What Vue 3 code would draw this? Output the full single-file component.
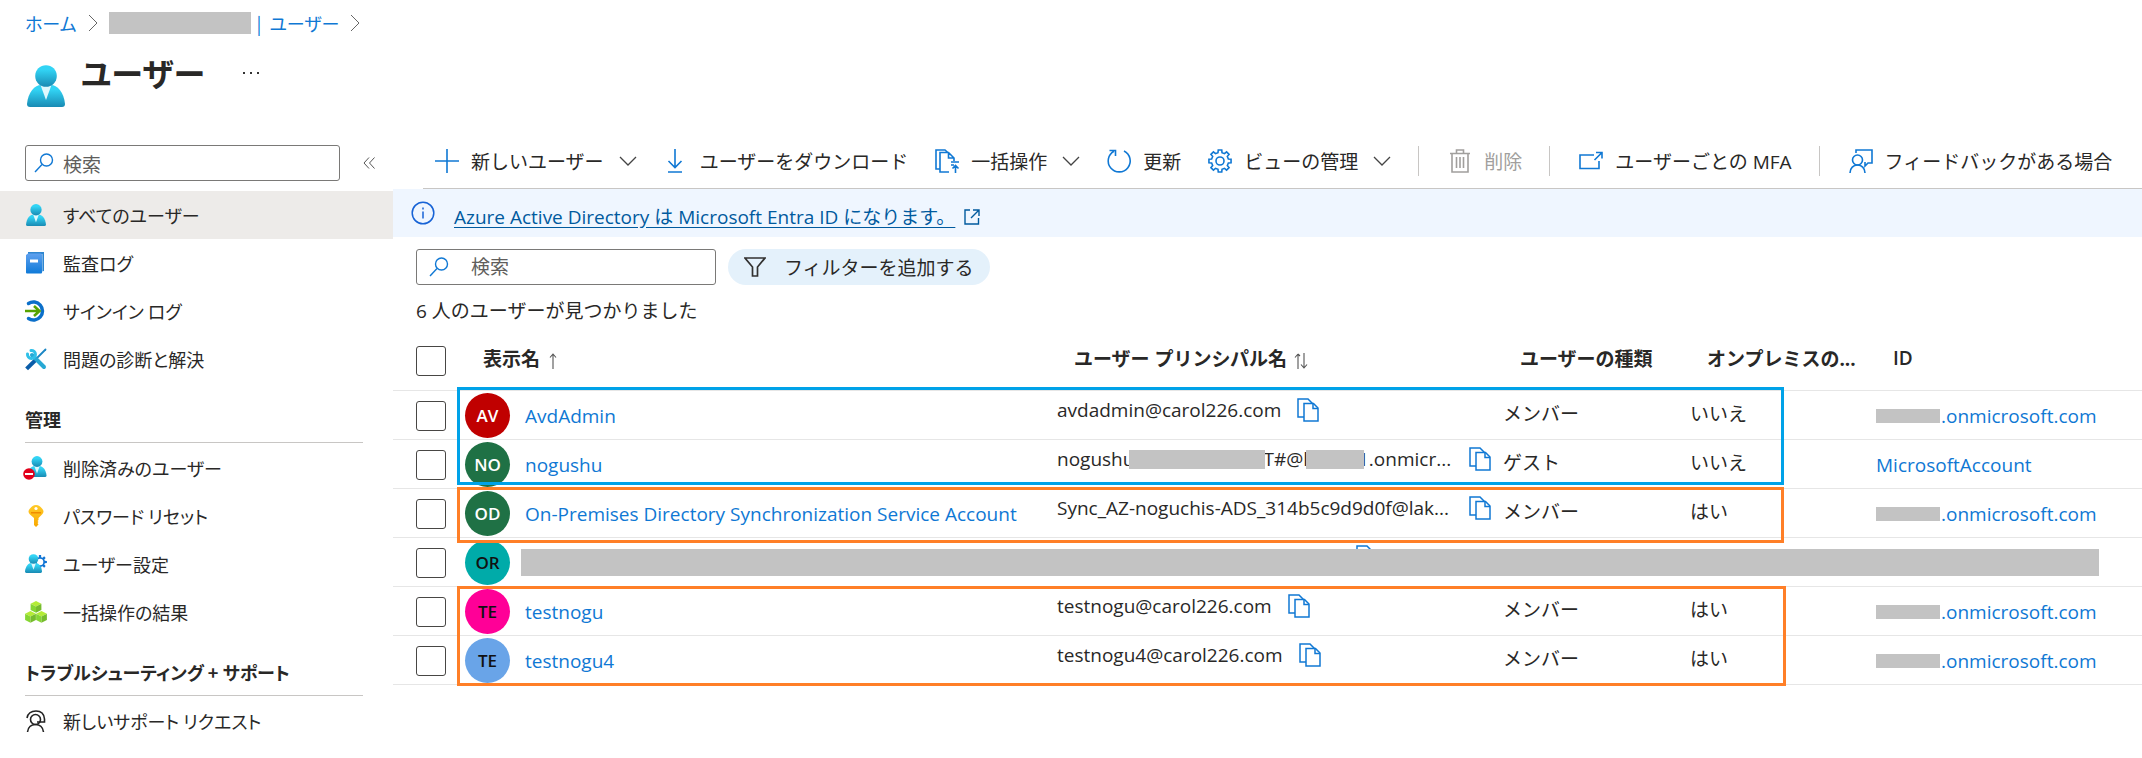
<script setup>
import { ref } from 'vue'

const gear = (cx, cy, outer, inner, teeth) => {
  const pts = []
  const step = (Math.PI * 2) / teeth
  for (let i = 0; i < teeth; i++) {
    const a = i * step - Math.PI / 2
    for (const [r, o] of [[inner, -0.3], [outer, -0.2], [outer, 0.2], [inner, 0.3]]) {
      pts.push(`${(cx + r * Math.cos(a + o * step)).toFixed(2)} ${(cy + r * Math.sin(a + o * step)).toFixed(2)}`)
    }
  }
  return `M${pts.join('L')}Z`
}
const gearLarge = gear(12, 12, 11.2, 8.6, 8)
const gearSmall = gear(15, 9, 7, 5, 8)

const general = [
  { icon: 'user', label: 'すべてのユーザー', active: true },
  { icon: 'book', label: '監査ログ' },
  { icon: 'signin', label: 'サインイン ログ' },
  { icon: 'tools', label: '問題の診断と解決' },
]
const manage = [
  { icon: 'deleted', label: '削除済みのユーザー' },
  { icon: 'key', label: 'パスワード リセット' },
  { icon: 'settings', label: 'ユーザー設定' },
  { icon: 'cubes', label: '一括操作の結果' },
]
const support = [{ icon: 'support', label: '新しいサポート リクエスト' }]
const groups = [
  { title: '', items: general },
  { title: '管理', items: manage },
  { title: 'トラブルシューティング + サポート', items: support },
]

const commands = [
  { icon: 'plus', label: '新しいユーザー', menu: true },
  { icon: 'download', label: 'ユーザーをダウンロード' },
  { icon: 'bulk', label: '一括操作', menu: true },
  { icon: 'refresh', label: '更新' },
  { icon: 'gear', label: 'ビューの管理', menu: true },
  { icon: 'trash', label: '削除', disabled: true, split: true },
  { icon: 'external', label: 'ユーザーごとの MFA', split: true },
  { icon: 'feedback', label: 'フィードバックがある場合', split: true },
]

const users = [
  { initials: 'AV', tone: 'red', name: 'AvdAdmin', upn: 'avdadmin@carol226.com', type: 'メンバー', sync: 'いいえ', tenant: true },
  { initials: 'NO', tone: 'green', name: 'nogushu', masked: true, wide: true, type: 'ゲスト', sync: 'いいえ', id: 'MicrosoftAccount' },
  { initials: 'OD', tone: 'green', name: 'On-Premises Directory Synchronization Service Account', upn: 'Sync_AZ-noguchis-ADS_314b5c9d9d0f@lak...', wide: true, type: 'メンバー', sync: 'はい', tenant: true },
  { initials: 'OR', tone: 'teal', hidden: true },
  { initials: 'TE', tone: 'pink', name: 'testnogu', upn: 'testnogu@carol226.com', type: 'メンバー', sync: 'はい', tenant: true },
  { initials: 'TE', tone: 'sky', name: 'testnogu4', upn: 'testnogu4@carol226.com', type: 'メンバー', sync: 'はい', tenant: true },
]
const menuQuery = ref('')
const userQuery = ref('')
</script>

<template>
  <div class="page">
    <svg class="defs" aria-hidden="true">
      <defs>
        <linearGradient id="cyan" x1="0" y1="0" x2="0" y2="1">
          <stop offset="0.2" stop-color="#32d4f5" />
          <stop offset="1" stop-color="#198ab3" />
        </linearGradient>
        <linearGradient id="blue" x1="0" y1="0" x2="0" y2="1">
          <stop offset="0" stop-color="#5ea0ef" />
          <stop offset="1" stop-color="#0f7ad8" />
        </linearGradient>
        <linearGradient id="gold" x1="0" y1="0" x2="0" y2="1">
          <stop offset="0" stop-color="#ffca28" />
          <stop offset="1" stop-color="#f9a800" />
        </linearGradient>
        <symbol id="person" viewBox="0 0 38 42">
          <path d="M35 42H3q-3 0-3-3C1 27 8 20 14 20h10c6 0 13 7 14 19q0 3-3 3Z" fill="url(#cyan)" />
          <path d="M13.500 20h11L19 35Z" fill="#dff8fd" />
          <circle cx="19" cy="11" r="10.800" fill="url(#cyan)" />
        </symbol>
        <symbol id="copy" viewBox="0 0 22 24">
          <g fill="#fff" stroke="#1078d4" stroke-width="1.500">
            <path d="M1 1h10l5 5v13H1Z" />
            <path d="M7 5.500h9.500l4.500 4.500v13H7Z" />
            <path d="M16 5.500V10.500h5" fill="none" />
          </g>
        </symbol>
      </defs>
    </svg>

    <header class="top">
      <nav class="crumbs" aria-label="階層">
        <a href="#">ホーム</a>
        <svg class="crumb-arrow" viewBox="0 0 10 18"><path d="M1 1l8 8-8 8" /></svg>
        <span class="mask crumb-mask"></span>
        <a href="#">| &nbsp;ユーザー</a>
        <svg class="crumb-arrow" viewBox="0 0 10 18"><path d="M1 1l8 8-8 8" /></svg>
      </nav>
      <div class="heading">
        <svg class="heading-icon"><use href="#person" /></svg>
        <h1>ユーザー</h1>
        <button class="more" aria-label="その他"><i></i><i></i><i></i></button>
      </div>
    </header>

    <div class="body">
      <aside class="side">
        <div class="side-search">
          <label class="field">
            <svg viewBox="0 0 20 20"><circle cx="12.500" cy="7" r="6" /><path d="M8 11.500L1 19" /></svg>
            <input v-model="menuQuery" type="text" placeholder="検索" aria-label="メニューの検索" />
          </label>
          <button class="collapse" aria-label="折りたたむ">
            <svg viewBox="0 0 12 12"><path d="M6 .5L1 6l5 5.500M11.500.5L6.500 6l5 5.500" /></svg>
          </button>
        </div>
        <section v-for="g in groups" :key="g.title" class="group">
          <h2 v-if="g.title">{{ g.title }}</h2>
          <a v-for="item in g.items" :key="item.label" href="#" class="item" :class="{ active: item.active }">
            <svg viewBox="0 0 22 22" class="item-icon">
              <use v-if="item.icon === 'user'" href="#person" x="1" y="0" width="20" height="22" />
              <g v-else-if="item.icon === 'book'">
                <path d="M4 0h15v19l-3 2Z" fill="#b9d9f5" />
                <path d="M3 0h16v19h-1.500V2H3Z" fill="#2f86d0" />
                <path d="M1 3l2-1.500h13l1 1v18q0 1-1 1H2q-1 0-1-1Z" fill="url(#blue)" />
                <path d="M5 7.500h8v3H5Z" fill="#fff" />
              </g>
              <g v-else-if="item.icon === 'signin'" fill="none">
                <path d="M3.500 3.500A9 9 0 1 1 3.500 18.500" stroke="#0b6fc9" stroke-width="3.500" stroke-linecap="round" />
                <path d="M0 11h14M9 6l5.500 5L9 16" stroke="#57a300" stroke-width="2.600" />
              </g>
              <g v-else-if="item.icon === 'tools'" fill="none" stroke-linecap="round">
                <path d="M20.500 1.500l-9 9" stroke="#1a86c4" stroke-width="1.800" />
                <path d="M9 13.500l-6 6" stroke="#0a5ca8" stroke-width="4" stroke-linecap="square" />
                <path d="M7 7l12 12" stroke="#27a8d4" stroke-width="4" />
                <path d="M6 2.500A4 4 0 1 1 2.500 6" stroke="#2fc0e8" stroke-width="3" />
              </g>
              <g v-else-if="item.icon === 'deleted'">
                <use href="#person" x="2" y="-1" width="20" height="21" />
                <circle cx="4" cy="17" r="5.800" fill="#e2001a" />
                <path d="M0 16h8v2H0Z" fill="#fff" />
              </g>
              <g v-else-if="item.icon === 'key'">
                <path d="M11 0c3 0 4 1.500 6 3.500s2 4 0 6L13.500 13v2l-1 1 1 1-1 1 1 1.500L11 22l-2-2v-7L5 9.500c-2-2-2-4 0-6S8 0 11 0Z" fill="url(#gold)" />
                <circle cx="11" cy="3.500" r="1.600" fill="#fff" />
                <path d="M6 7h10v1.500H6Z" fill="#f08b00" />
              </g>
              <g v-else-if="item.icon === 'settings'">
                <path :d="gearSmall" fill="#0f74d4" />
                <circle cx="15" cy="9" r="3.300" fill="#fff" />
                <use href="#person" x="0" y="1" width="17" height="19" />
              </g>
              <g v-else-if="item.icon === 'cubes'">
                <g v-for="p in [[11, 0], [5.500, 10], [16.500, 10]]" :key="p[0]" :transform="`translate(${p[0]} ${p[1]})`">
                  <path d="M0 0L5.400 2.800 0 5.600-5.400 2.800Z" fill="#b4ec36" />
                  <path d="M-5.400 2.800L0 5.600V11.800L-5.400 9Z" fill="#86d633" />
                  <path d="M5.400 2.800L0 5.600V11.800L5.400 9Z" fill="#76bc2d" />
                </g>
              </g>
              <g v-else fill="none" stroke="#222" stroke-width="1.600">
                <path d="M2 8C3 3 7 1 11 1s8 2 8.500 8v3H12" />
                <circle cx="10.500" cy="9.500" r="5" />
                <path d="M2.500 22c.5-5 4-7.500 8-7.500s7.500 2.500 8 7.500" />
              </g>
            </svg>
            {{ item.label }}
          </a>
        </section>
      </aside>

      <main class="main">
        <div class="toolbar" role="toolbar">
          <template v-for="c in commands" :key="c.label">
            <span v-if="c.split" class="split"></span>
            <button class="cmd" :disabled="c.disabled">
              <svg viewBox="0 0 24 24" class="cmd-icon" :class="c.icon">
                <path v-if="c.icon === 'plus'" d="M12 0v24M0 12h24" />
                <path v-else-if="c.icon === 'download'" d="M11 0v18M4.500 12l6.500 6.500 6.500-6.500M4 23h14" />
                <g v-else-if="c.icon === 'bulk'">
                  <path d="M5 20H1V1h9l4 3.500M14 23H5V3.500h8.500L19 9v3M13.500 3.500V9H19M16 13h8M16 16h3M20.500 24V17M17.500 19.500l3-3 3 3" />
                </g>
                <path v-else-if="c.icon === 'refresh'" d="M17 2A11 11 0 1 1 7 2.200M2.500 1.500H8.500V7" />
                <g v-else-if="c.icon === 'gear'"><path :d="gearLarge" /><circle cx="12" cy="12" r="4" /></g>
                <path v-else-if="c.icon === 'trash'" d="M2 4.500h20M4 4.500V23h16V4.500M8.500 4V1h7v3M8.500 8v11M12 8v11M15.500 8v11" />
                <path v-else-if="c.icon === 'external'" d="M15 6H1v13.500h19V12M15.500 11L22.500 4M17 3.500h6v6" />
                <g v-else>
                  <circle cx="8.500" cy="11" r="5" />
                  <path d="M1 24c0-5 3.500-8 7.500-8s7.500 3 7.500 8M7 4V1h16v13h-4l-3 3v-4" />
                </g>
              </svg>
              <span>{{ c.label }}</span>
              <svg v-if="c.menu" class="down" viewBox="0 0 18 10"><path d="M1 1l8 8 8-8" /></svg>
            </button>
          </template>
        </div>

        <div class="banner">
          <svg class="info" viewBox="0 0 24 24"><circle cx="12" cy="12" r="10.800" /><path d="M12 10.500v7M12 6.500v2" /></svg>
          <a href="#">Azure Active Directory は Microsoft Entra ID になります。</a>
          <svg class="out" viewBox="0 0 16 16"><path d="M6 1H1v14h13.500V9M9 1h6v6M15 1L7 9" /></svg>
        </div>

        <div class="filters">
          <label class="field">
            <svg viewBox="0 0 20 20"><circle cx="12.500" cy="7" r="6" /><path d="M8 11.500L1 19" /></svg>
            <input v-model="userQuery" type="text" placeholder="検索" aria-label="ユーザーの検索" />
          </label>
          <button class="pill">
            <svg viewBox="0 0 22 20"><path d="M1 1h20l-7.500 9v9h-5v-9Z" /></svg>
            フィルターを追加する
          </button>
        </div>
        <p class="count">6 人のユーザーが見つかりました</p>

        <div class="grid">
          <table>
            <colgroup>
              <col class="c-check" /><col class="c-name" /><col class="c-upn" /><col class="c-type" /><col class="c-sync" /><col />
            </colgroup>
            <thead>
              <tr>
                <th><input type="checkbox" aria-label="すべて選択" /></th>
                <th class="h-name">表示名
                  <svg class="sort" viewBox="0 0 8 16"><path d="M4 16V1M1 4.500L4 1l3 3.500" /></svg>
                </th>
                <th>ユーザー プリンシパル名
                  <svg class="sort both" viewBox="0 0 14 16"><path d="M4 16V1M1 4.500L4 1M10 0v15M7 11.500l3 3.500 3-3.500M4 1l2 2" /></svg>
                </th>
                <th>ユーザーの種類</th>
                <th>オンプレミスの...</th>
                <th>ID</th>
              </tr>
            </thead>
            <tbody>
              <tr v-for="(u, i) in users" :key="i">
                <td><input type="checkbox" :aria-label="u.name || u.initials" /></td>
                <td :colspan="u.hidden ? 5 : 1">
                  <div class="cell name">
                    <span class="avatar" :class="u.tone">{{ u.initials }}</span>
                    <a v-if="u.name" href="#">{{ u.name }}</a>
                    <template v-else>
                      <svg class="copy behind"><use href="#copy" /></svg>
                      <span class="mask row-mask"></span>
                    </template>
                  </div>
                </td>
                <template v-if="!u.hidden">
                  <td>
                    <div class="cell upn" :class="{ wide: u.wide }">
                      <span v-if="u.masked" class="masked">nogushu<span class="mask m1"></span>T#@l<span class="mask m2"></span>1.onmicr...</span>
                      <span v-else>{{ u.upn }}</span>
                      <button class="copy-btn" aria-label="コピー"><svg class="copy"><use href="#copy" /></svg></button>
                    </div>
                  </td>
                  <td><div class="cell kana">{{ u.type }}</div></td>
                  <td><div class="cell kana">{{ u.sync }}</div></td>
                  <td>
                    <div class="cell id">
                      <a v-if="u.tenant" href="#"><span class="mask m3"></span>.onmicrosoft.com</a>
                      <a v-else href="#">{{ u.id }}</a>
                    </div>
                  </td>
                </template>
              </tr>
            </tbody>
          </table>
          <div class="mark mark-a"></div>
          <div class="mark mark-b"></div>
          <div class="mark mark-c"></div>
        </div>
      </main>
    </div>
  </div>
</template>

<style>
body { margin: 0; background: #fff; }
</style>

<style scoped>
.page { font-family: 'Open Sans', 'Noto Sans CJK JP', sans-serif; font-size: 19px; color: #292827; overflow: hidden; min-height: 100vh; }
.page *, .page *::before { box-sizing: border-box; }
.defs { position: absolute; width: 0; height: 0; }
svg { display: block; flex: none; }
a { color: #0f78d4; text-decoration: none; }
button { font: inherit; color: inherit; background: none; border: 0; padding: 0; display: flex; align-items: center; white-space: nowrap; }
.mask { background: #c3c3c3; flex: none; }

.top { height: 134px; padding-left: 25px; font-family: 'Noto Sans CJK JP', sans-serif; font-size: 18px; font-feature-settings: 'palt'; }
.crumbs { display: flex; align-items: center; height: 46px; }
.crumbs a { line-height: 46px; white-space: nowrap; }
.crumb-arrow { width: 10px; height: 18px; margin: 0 11px; fill: none; stroke: #666; stroke-width: 1; }
.crumb-mask { width: 142px; height: 22px; margin-right: 6px; }
.heading { display: flex; align-items: flex-start; }
.heading-icon { width: 38px; height: 42px; margin: 19px 16px 0 2px; }
h1 { margin: 0; font-size: 32px; line-height: 52px; font-weight: 700; }
.more { gap: 5px; margin: 26px 0 0 38px; }
.more i { width: 2px; height: 2px; background: #333; }

.body { display: flex; }
.side { width: 393px; flex: none; padding-top: 11px; font-family: 'Noto Sans CJK JP', sans-serif; font-size: 18px; font-feature-settings: 'palt'; }
.side-search { display: flex; align-items: center; padding-left: 25px; margin-bottom: 10px; }
.field { display: flex; align-items: center; height: 36px; border: 1px solid #7a7977; border-radius: 3px; background: #fff; padding: 0 8px; flex: none; }
.field svg { width: 20px; height: 20px; fill: none; stroke: #1078d4; stroke-width: 1.4; }
.field input { flex: 1; min-width: 0; border: 0; outline: 0; background: none; padding: 0; margin-left: 9px; font: inherit; font-size: 19px; height: 32px; }
.field input::placeholder { color: #605e5c; opacity: 1; }
.side .field { width: 315px; }
.collapse { margin-left: 23px; }
.collapse svg { width: 12px; height: 12px; fill: none; stroke: #555; stroke-width: 1; }
.group h2 { margin: 12px 30px 1px 25px; height: 48px; line-height: 48px; font-size: 18px; font-weight: 700; border-bottom: 1px solid #c8c6c4; white-space: nowrap; }
.item { display: flex; align-items: center; height: 48px; padding-left: 25px; color: #292827; white-space: nowrap; }
.item.active { background: #edebe9; }
.item-icon { width: 22px; height: 22px; margin-right: 16px; overflow: visible; }

.main { flex: 1; min-width: 0; }
.toolbar { display: flex; align-items: center; height: 55px; margin-left: 30px; padding-left: 12px; border-bottom: 1px solid #c8c6c4; }
.cmd { margin-right: 27px; }
.cmd-icon { width: 24px; height: 24px; margin-right: 12px; fill: none; stroke: #1078d4; stroke-width: 1.6; overflow: visible; }
.down { width: 18px; height: 10px; margin-left: 15px; fill: none; stroke: #444; stroke-width: 1.3; }
.cmd:disabled { color: #a19f9d; }
.cmd:disabled .cmd-icon { stroke: #a19f9d; }
.split { width: 1px; height: 30px; background: #c8c6c4; margin-right: 29px; }
.banner { display: flex; align-items: center; height: 48px; background: #eff6ff; padding-left: 18px; }
.info { width: 24px; height: 24px; margin-right: 19px; fill: none; stroke: #1763d6; stroke-width: 1.5; }
.banner a { color: #005a9e; line-height: 24px; margin-top: 8px; text-decoration: underline; text-underline-offset: 3px; }
.out { width: 16px; height: 16px; margin: 8px 0 0 9px; fill: none; stroke: #005a9e; stroke-width: 1.4; }
.filters { display: flex; gap: 12px; padding: 12px 0 0 23px; }
.filters .field { width: 300px; padding-left: 12px; }
.filters .field input { margin-left: 22px; }
.pill { height: 36px; padding: 0 16px; border-radius: 18px; background: #e4f1fb; }
.pill svg { width: 22px; height: 20px; margin-right: 18px; fill: none; stroke: #323130; stroke-width: 1.7; }
.count { margin: 12px 0 0 23px; line-height: 28px; }

.grid { position: relative; margin-top: 5px; }
table { width: 100%; table-layout: fixed; border-collapse: separate; border-spacing: 0; }
.c-check { width: 64px; }
.c-name { width: 600px; }
.c-upn { width: 446px; }
.c-type { width: 187px; }
.c-sync { width: 186px; }
th { height: 61px; padding: 0 0 5px 17px; text-align: left; font-weight: 700; border-bottom: 1px solid #e6e6e6; white-space: nowrap; }
th.h-name { padding-left: 26px; }
th:last-child { font-weight: 600; }
td { height: 49px; padding: 0; border-bottom: 1px solid #e6e6e6; }
th:first-child, td:first-child { padding: 1px 0 0 23px; }
input[type='checkbox'] { appearance: none; display: block; width: 30px; height: 30px; margin: 0; border: 1px solid #484644; border-radius: 3px; background: #fff; }
.sort { display: inline-block; width: 8px; height: 16px; margin-left: 4px; vertical-align: -3px; fill: none; stroke: #555; stroke-width: 1.1; }
.sort.both { width: 14px; margin-left: 2px; }
.cell { display: flex; align-items: center; height: 48px; white-space: nowrap; }
.name { position: relative; padding-left: 8px; }
.name a, .id a { padding-top: 2px; }
.avatar { width: 45px; height: 45px; margin-right: 15px; border-radius: 50%; flex: none; display: flex; align-items: center; justify-content: center; font-size: 17px; font-weight: 600; color: #fff; }
.red { background: #c00000; }
.green { background: #1f7145; }
.teal { background: #00aba9; color: #111; }
.pink { background: #ff0097; color: #111; }
.sky { background: #69a4e8; color: #111; }
.upn { padding-bottom: 10px; padding-right: 12px; }
.upn.wide { justify-content: space-between; }
.copy { width: 22px; height: 24px; }
.copy-btn { margin-left: 16px; }
.wide .copy-btn { margin-left: 0; }
.behind { position: absolute; left: 899px; top: 7px; }
.row-mask { flex: 1; height: 27px; margin: 0 43px 0 -4px; position: relative; }
.masked { display: flex; align-items: center; }
.m1 { width: 136px; height: 19px; margin: 0 -2px 0 -5px; position: relative; }
.m2 { width: 58px; height: 19px; margin: 0 -6px 0 -2px; position: relative; }
.kana { padding-bottom: 4px; }
.id a { display: flex; align-items: center; }
.m3 { width: 64px; height: 14px; margin-right: 1px; }
.mark { position: absolute; left: 64px; right: 358px; border: 3px solid #ff7f27; pointer-events: none; }
.mark-a { top: 57px; height: 98px; border-color: #00a2e8; }
.mark-b { top: 157px; height: 56px; }
.mark-c { top: 256px; right: 356px; height: 100px; }
</style>
